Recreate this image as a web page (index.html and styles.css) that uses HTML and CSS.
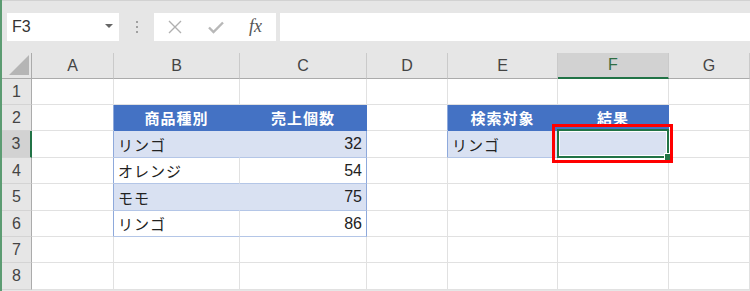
FILE: index.html
```html
<!DOCTYPE html>
<html lang="ja">
<head>
<meta charset="utf-8">
<link rel="stylesheet" href="styles.css">
</head>
<body>
<div class="app">
  <div class="toolbar">
    <div class="namebox"><span class="nb-text">F3</span><span class="nb-arrow"></span></div>
    <div class="dots"><i></i><i></i><i></i></div>
    <div class="fbtns">
      <svg class="ic-x" width="14" height="14" viewBox="0 0 14 14"><path d="M1 1 L13 13 M13 1 L1 13" stroke="#b0b0b0" stroke-width="1.4" fill="none"/></svg>
      <svg class="ic-ok" width="16" height="13" viewBox="0 0 16 13"><path d="M1 6.5 L5.5 11 L15 1.5" stroke="#b8b8b8" stroke-width="2.4" fill="none"/></svg>
      <span class="fx">fx</span>
    </div>
    <div class="finput"></div>
  </div>
  <div class="sheet">
    <div class="ch corner"><span class="tri"></span></div>
    <div class="ch">A</div>
    <div class="ch">B</div>
    <div class="ch">C</div>
    <div class="ch">D</div>
    <div class="ch">E</div>
    <div class="ch ch-sel">F</div>
    <div class="ch">G</div>

    <div class="rh">1</div>
    <div class="c"></div><div class="c"></div><div class="c"></div><div class="c"></div><div class="c"></div><div class="c"></div><div class="c"></div>

    <div class="rh">2</div>
    <div class="c tl"></div>
    <div class="c th">商品種別</div>
    <div class="c th th-end">売上個数</div>
    <div class="c tl"></div>
    <div class="c th">検索対象</div>
    <div class="c th th-end">結果</div>
    <div class="c"></div>

    <div class="rh rh-sel">3</div>
    <div class="c tl"></div>
    <div class="c tb jp">リンゴ</div>
    <div class="c tb te num">32</div>
    <div class="c tl"></div>
    <div class="c tb jp">リンゴ</div>
    <div class="c tb te sel-cell"><span class="sel"><span class="handle"></span></span><span class="mark"></span></div>
    <div class="c"></div>

    <div class="rh">4</div>
    <div class="c tl"></div>
    <div class="c tw jp">オレンジ</div>
    <div class="c tw te num">54</div>
    <div class="c"></div>
    <div class="c"></div>
    <div class="c"></div>
    <div class="c"></div>

    <div class="rh">5</div>
    <div class="c tl"></div>
    <div class="c tb jp">モモ</div>
    <div class="c tb te num">75</div>
    <div class="c"></div>
    <div class="c"></div>
    <div class="c"></div>
    <div class="c"></div>

    <div class="rh">6</div>
    <div class="c tl"></div>
    <div class="c tw jp">リンゴ</div>
    <div class="c tw te num">86</div>
    <div class="c"></div>
    <div class="c"></div>
    <div class="c"></div>
    <div class="c"></div>

    <div class="rh">7</div>
    <div class="c"></div><div class="c"></div><div class="c"></div><div class="c"></div><div class="c"></div><div class="c"></div><div class="c"></div>

    <div class="rh">8</div>
    <div class="c"></div><div class="c"></div><div class="c"></div><div class="c"></div><div class="c"></div><div class="c"></div><div class="c"></div>
  </div>
</div>
</body>
</html>
```

FILE: styles.css
```css
* { box-sizing: border-box; }
html, body { margin: 0; padding: 0; }
body {
  background: #e6e6e6;
  font-family: "Liberation Sans", "Noto Sans CJK JP", sans-serif;
  width: 750px;
  height: 291px;
  overflow: hidden;
}
.app {
  border-left: 2px solid #5c9c72;
  height: 291px;
  background: #e6e6e6;
}
.toolbar {
  height: 53px;
  border-top: 1px solid #d2d2d2;
  display: flex;
  align-items: flex-start;
  padding-top: 12px;
}
.namebox {
  margin-left: 5px;
  width: 112px;
  height: 28px;
  background: #fff;
  display: flex;
  align-items: center;
  justify-content: space-between;
  padding: 0 6px 0 5px;
}
.nb-text {
  font-size: 16px;
  color: #333;
}
.nb-arrow {
  width: 0; height: 0;
  border-left: 4px solid transparent;
  border-right: 4px solid transparent;
  border-top: 4px solid #666;
  margin-top: -3px;
}
.dots {
  width: 35px;
  height: 28px;
  display: flex;
  flex-direction: column;
  align-items: center;
  justify-content: center;
  gap: 3px;
}
.dots i {
  display: block;
  width: 2px;
  height: 2px;
  background: #a0a0a0;
}
.fbtns {
  width: 122px;
  height: 28px;
  background: #fff;
  display: flex;
  align-items: center;
  padding-left: 14px;
}
.ic-x { margin-right: 26px; }
.ic-ok { margin-right: 25px; margin-top: 1px; }
.fx {
  font-family: "Liberation Serif", serif;
  font-style: italic;
  font-size: 18px;
  color: #555;
  margin-top: -2px;
}
.finput {
  margin-left: 4px;
  flex: 1;
  height: 28px;
  background: #fff;
}
.sheet {
  display: grid;
  grid-template-columns: 30px 82px 126px 127px 81px 110px 111px 1fr;
  grid-template-rows: 26px 26px 26px 27px 26px 27px 26px 26px 27px;
  font-size: 15px;
  color: #222;
}
.ch {
  background: #e6e6e6;
  border-right: 1px solid #cacaca;
  border-bottom: 1px solid #ababab;
  display: flex;
  align-items: center;
  justify-content: center;
  color: #444;
  font-size: 16px;
}
.ch-sel {
  background: #d2d2d2;
  border-bottom: 2px solid #217346;
  color: #2f6e43;
}
.corner {
  border-right: 1px solid #ababab;
  position: relative;
}
.tri {
  position: absolute;
  right: 2px;
  bottom: 3px;
  width: 0; height: 0;
  border-left: 20px solid transparent;
  border-bottom: 20px solid #b5b5b5;
}
.rh {
  background: #e6e6e6;
  border-right: 1px solid #ababab;
  border-bottom: 1px solid #d4d4d4;
  display: flex;
  align-items: center;
  justify-content: center;
  color: #444;
  font-size: 16px;
}
.rh-sel {
  background: #d2d2d2;
  border-right: 2px solid #217346;
}
.c {
  background: #fff;
  border-right: 1px solid #e1e1e1;
  border-bottom: 1px solid #e1e1e1;
  display: flex;
  align-items: center;
  padding: 0 4px 0 4px;
  white-space: nowrap;
  font-size: 16px;
}
.jp { font-size: 15px; letter-spacing: 1px; }
.tl { border-right-color: #8ea9db; }
.th {
  background: #4472c4;
  color: #fff;
  font-weight: bold;
  font-size: 15px;
  justify-content: center;
  border-right-color: #4472c4;
  border-bottom-color: #4472c4;
  letter-spacing: 1px;
}
.th.th-end { border-right-color: #4472c4; }
.tb {
  background: #d9e1f2;
  border-right-color: #d9e1f2;
  border-bottom-color: #b4c6e7;
}
.tw {
  border-bottom-color: #b4c6e7;
}
.te { border-right-color: #8ea9db; }
.num { justify-content: flex-end; }
.sel-cell { position: relative; }
.sel {
  position: absolute;
  left: -1px;
  right: -1px;
  top: -2px;
  bottom: -1px;
  border: 2px solid #217346;
  box-shadow: inset 0 0 0 1px #fff;
}
.handle {
  position: absolute;
  right: -4px;
  bottom: -4px;
  width: 6px;
  height: 6px;
  background: #217346;
  outline: 1px solid #fff;
}
.mark {
  position: absolute;
  left: -6px;
  right: -5px;
  top: -7px;
  bottom: -6px;
  border: 3px solid #ff0000;
}
```
